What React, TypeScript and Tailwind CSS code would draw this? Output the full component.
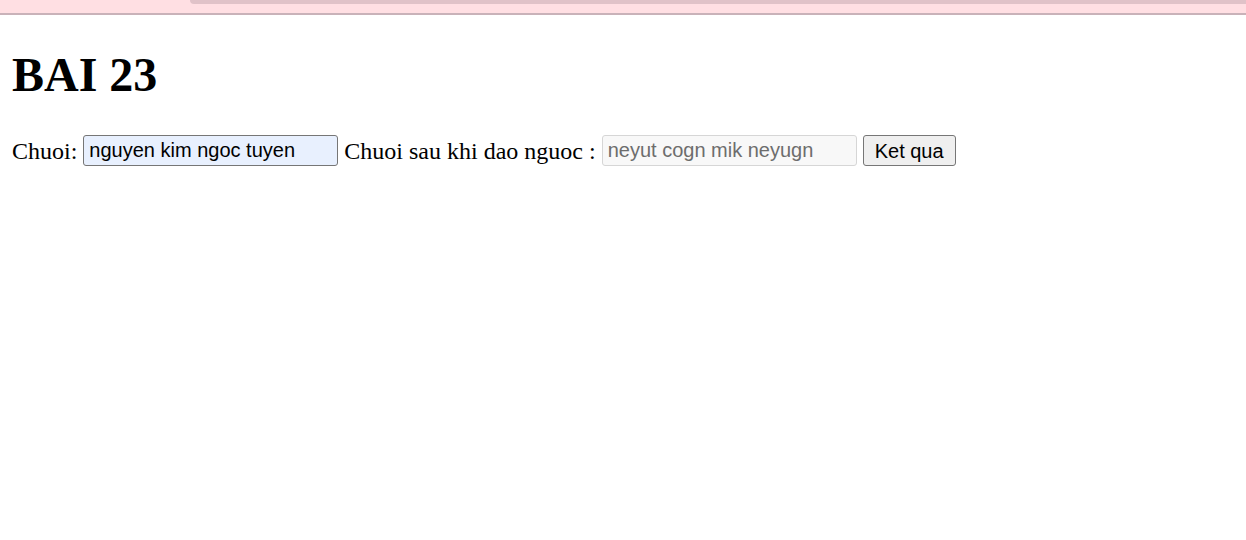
import React from 'react'

export default function App() {
  return (
    <div className="min-h-[540px] bg-white text-black">
      {/* browser top strip */}
      <div className="flex h-[15px] bg-[#ffdfe3] border-b-2 border-[#c9b2b9]">
        <div className="w-[190px]" />
        <div className="flex-1 h-[4px] bg-[#e0c2c8] rounded-bl-[10px]" />
      </div>

      <div className="px-[12px]">
        <h1 className="mt-[32px] mb-[32px] text-[48px] leading-[55px] font-bold font-['Liberation_Serif',serif]">
          BAI 23
        </h1>

        <div className="flex items-center gap-[6px] h-[31px] mt-[33px] text-[24px] font-['Liberation_Serif',serif]">
          <span>Chuoi:</span>
          <input
            type="text"
            defaultValue="nguyen kim ngoc tuyen"
            className="w-[255px] h-[31px] px-[5px] text-[20px] font-['Liberation_Sans',Arial,sans-serif] bg-[#e8f0fe] border border-[#767676] rounded-[3px] outline-none"
          />
          <span>Chuoi sau khi dao nguoc :</span>
          <input
            type="text"
            readOnly
            value="neyut cogn mik neyugn"
            className="w-[255px] h-[31px] px-[5px] text-[20px] font-['Liberation_Sans',Arial,sans-serif] text-[#6d6d6d] bg-[#f8f8f8] border border-[#d6d6d6] rounded-[3px] outline-none"
          />
          <button className="w-[93px] h-[31px] text-[20px] font-['Liberation_Sans',Arial,sans-serif] bg-[#efefef] border border-[#767676] rounded-[3px]">
            Ket qua
          </button>
        </div>
      </div>
    </div>
  )
}
